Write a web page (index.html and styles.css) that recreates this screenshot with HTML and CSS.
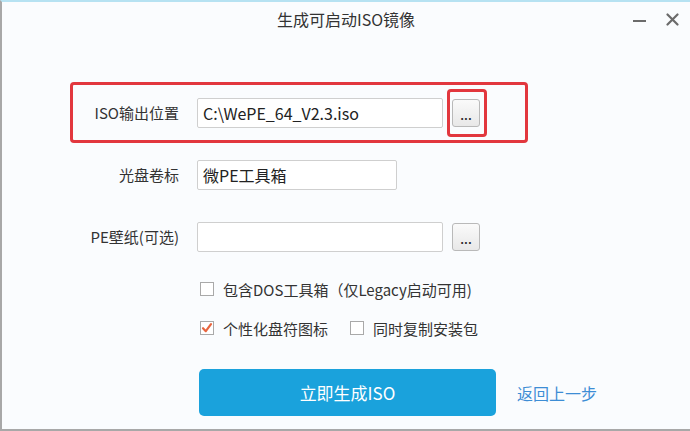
FILE: index.html
```html
<!DOCTYPE html>
<html lang="zh-CN">
<head>
    <meta charset="UTF-8">
    <title>生成可启动ISO镜像</title>
    <link rel="stylesheet" href="styles.css">
</head>
<body>
    <div class="window">
        <div class="titlebar">
            <span></span>
            <div class="title">生成可启动ISO镜像</div>
            <div class="controls">
                <span class="min"></span>
                <svg class="close" width="13" height="13" viewBox="0 0 13 13">
                    <path d="M1.5 1.5 L11.5 11.5 M11.5 1.5 L1.5 11.5" stroke="#6b6b6b" stroke-width="2.2" stroke-linecap="round"/>
                </svg>
            </div>
        </div>

        <div class="form">
            <div class="row mark">
                <label class="label">ISO输出位置</label>
                <div class="field wide">C:\WePE_64_V2.3.iso</div>
                <span class="browse mark"><button class="dots">...</button></span>
            </div>
            <div class="row">
                <label class="label">光盘卷标</label>
                <div class="field short">微PE工具箱</div>
            </div>
            <div class="row">
                <label class="label">PE壁纸(可选)</label>
                <div class="field wide"></div>
                <span class="browse"><button class="dots">...</button></span>
            </div>

            <div class="options">
                <div class="opt">
                    <span class="box"></span>
                    <span>包含DOS工具箱（仅Legacy启动可用)</span>
                </div>
                <div class="opt">
                    <span class="box">
                        <svg width="12" height="12" viewBox="0 0 12 12">
                            <path d="M2 6.2 L4.8 9.2 L10 2.2" fill="none" stroke="#e8653f" stroke-width="2.2" stroke-linecap="round" stroke-linejoin="round"/>
                        </svg>
                    </span>
                    <span>个性化盘符图标</span>
                    <span class="box second"></span>
                    <span>同时复制安装包</span>
                </div>
            </div>

            <div class="actions">
                <button class="primary">立即生成ISO</button>
                <a class="back" href="#">返回上一步</a>
            </div>
        </div>
    </div>
</body>
</html>
```

FILE: styles.css
```css
* {
    box-sizing: border-box;
}

body {
    margin: 0;
    font-family: "Noto Sans CJK SC", "Noto Sans", sans-serif;
    color: #333;
    background: #fafcfe;
}

.window {
    width: 690px;
    height: 431px;
    background: #fafcfe;
    border-top: 2px solid #b6e2f2;
    border-left: 2px solid #a8a8a8;
    border-bottom: 2px solid #a8a8a8;
}

.titlebar {
    display: grid;
    grid-template-columns: 1fr auto 1fr;
    align-items: center;
    height: 34px;
}

.title {
    font-size: 16px;
    color: #333;
}

.controls {
    display: flex;
    justify-content: flex-end;
    align-items: center;
    gap: 20px;
    padding-right: 11px;
}

.min {
    width: 13px;
    height: 2px;
    background: #6b6b6b;
    margin-top: 4px;
}

.form {
    margin-top: 46px;
    margin-left: 68px;
}

.row {
    display: flex;
    align-items: center;
    height: 61px;
    width: 458px;
    margin-bottom: 1px;
    border: 3px solid transparent;
    border-radius: 4px;
}

.row.mark {
    border-color: #e2373e;
}

.label {
    width: 106px;
    text-align: right;
    font-size: 15px;
    margin-right: 18px;
}

.field {
    height: 30px;
    background: #fff;
    border: 1px solid #cfcfcf;
    border-radius: 2px;
    padding: 0 5px;
    font-size: 16px;
    line-height: 28px;
    color: #222;
}

.field.wide {
    width: 246px;
}

.field.short {
    width: 200px;
}

.browse {
    display: flex;
    margin-left: 4px;
    padding: 7px 4px 7px 2px;
    border: 3px solid transparent;
    border-radius: 4px;
}

.browse.mark {
    border-color: #e2373e;
}

.dots {
    width: 28px;
    height: 28px;
    padding: 9px 0 0;
    border: 1px solid #b9b9b9;
    border-radius: 3px;
    background: linear-gradient(#fafafa, #e8e8e8);
    font-family: "DejaVu Sans", sans-serif;
    font-size: 10px;
    font-weight: bold;
    line-height: 12px;
    color: #333;
}

.options {
    margin-top: 11px;
    margin-left: 130px;
    font-size: 15px;
}

.opt {
    display: flex;
    align-items: center;
    height: 22px;
    margin-bottom: 17px;
}

.box {
    display: flex;
    align-items: center;
    justify-content: center;
    width: 14px;
    height: 14px;
    margin-right: 9px;
    background: #fff;
    border: 1px solid #a9a9a9;
}

.box.second {
    margin-left: 22px;
}

.actions {
    display: flex;
    align-items: center;
    margin-top: 30px;
    margin-left: 129px;
}

.primary {
    width: 297px;
    height: 47px;
    border: none;
    border-radius: 5px;
    background: #1aa2dc;
    color: #fff;
    font-family: inherit;
    font-size: 17px;
}

.back {
    margin-left: 21px;
    font-size: 16px;
    color: #3d8dd5;
    text-decoration: none;
}
```
